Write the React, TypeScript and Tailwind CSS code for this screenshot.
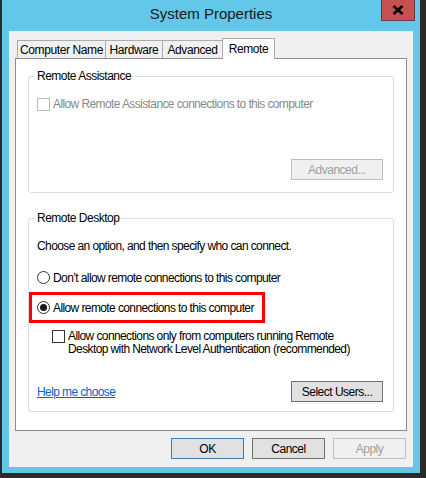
import React from "react";

const font = { fontFamily: '"Liberation Sans", Arial, sans-serif' };

function Checkbox({ disabled }: { disabled?: boolean }) {
  return (
    <span
      className={
        "block h-[13px] w-[13px] shrink-0 border bg-white " +
        (disabled ? "border-[#bcbcbc]" : "border-[#333333]")
      }
    />
  );
}

function Radio({ checked }: { checked?: boolean }) {
  return (
    <span className="flex h-[13px] w-[13px] shrink-0 items-center justify-center rounded-full border border-[#333333] bg-white">
      {checked && <span className="h-[7px] w-[7px] rounded-full bg-[#1a1a1a]" />}
    </span>
  );
}

function Button({
  label,
  variant = "normal",
  className = "",
}: {
  label: string;
  variant?: "normal" | "default" | "disabled";
  className?: string;
}) {
  const styles = {
    normal: "border-[#707070] bg-[#e1e1e1] text-black",
    default: "border-[#3c7fb1] bg-[#e1e1e1] text-black",
    disabled: "border-[#bfbfbf] bg-[#f0f0f0] text-[#a0a0a0]",
  }[variant];
  return (
    <div
      className={
        "flex h-[21px] items-center justify-center whitespace-nowrap border text-[12px] tracking-[-0.5px] " +
        styles +
        " " +
        className
      }
    >
      {label}
    </div>
  );
}

function GroupTitle({ children }: { children: React.ReactNode }) {
  return (
    <span className="-mt-[8px] ml-[6px] self-start whitespace-nowrap bg-white px-[2px] text-[12px] leading-[14px] tracking-[-0.5px] text-black">
      {children}
    </span>
  );
}

const tabs = [
  { label: "Computer Name", w: "w-[89px]" },
  { label: "Hardware", w: "w-[58px]" },
  { label: "Advanced", w: "w-[61px]" },
];

export default function App() {
  return (
    <div
      className="h-[478px] w-[426px] bg-[#2b2b2b] pb-[5px] pl-[2px] pr-[6px]"
      style={font}
    >
      <div className="flex h-full flex-col bg-[#63c7ea] px-[7px] pb-[6px]">
        {/* title bar */}
        <div className="relative -mx-[7px] flex h-[31px] shrink-0 items-center justify-center">
          <span className="pb-[2px] text-[15px] text-[#1a1a1a]">System Properties</span>
          <div className="absolute right-[5px] top-0 flex h-[21px] w-[34px] items-center justify-center border border-[#6b3a3a] border-t-0 bg-[#c75050]">
            <svg width="12" height="10" viewBox="0 0 12 10">
              <path d="M1.5 1 L10.5 9 M10.5 1 L1.5 9" stroke="#000" strokeWidth="2.6" />
            </svg>
          </div>
        </div>

        {/* client area */}
        <div className="flex flex-1 flex-col bg-[#f0f0f0] px-[6px] pt-[7px] text-[12px] tracking-[-0.6px]">
          <div className="flex h-[20px] items-end pl-[2px] tracking-[-0.4px]">
            {tabs.map((t, i) => (
              <div
                key={t.label}
                className={
                  "flex h-[18px] items-center justify-center whitespace-nowrap border border-b-0 border-[#acacac] bg-[#f0f0f0] text-black " +
                  t.w +
                  (i > 0 ? " -ml-px" : "")
                }
              >
                {t.label}
              </div>
            ))}
            <div className="relative z-10 -mb-px -ml-px flex h-[21px] w-[53px] items-center justify-center border border-b-0 border-[#acacac] bg-white pb-[1px] text-black">
              Remote
            </div>
          </div>

          {/* tab panel */}
          <div className="flex h-[373px] flex-col border border-[#898c95] bg-white px-[12px]">
            {/* Remote Assistance */}
            <div className="mt-[17px] flex h-[117px] flex-col rounded-[3px] border border-[#d5dfe5]">
              <GroupTitle>Remote Assistance</GroupTitle>
              <div className="mt-[15px] flex items-center gap-[3px] pl-[8px]">
                <Checkbox disabled />
                <span className="whitespace-nowrap leading-[13px] text-[#8a8a8a]">
                  Allow Remote Assistance connections to this computer
                </span>
              </div>
              <div className="mb-[12px] mr-[10px] mt-auto flex justify-end">
                <Button label="Advanced..." variant="disabled" className="w-[92px]" />
              </div>
            </div>

            {/* Remote Desktop */}
            <div className="mt-[25px] flex h-[194px] flex-col rounded-[3px] border border-[#d5dfe5]">
              <GroupTitle>Remote Desktop</GroupTitle>
              <p className="mt-[14px] whitespace-nowrap pl-[8px] leading-[15px] text-black">
                Choose an option, and then specify who can connect.
              </p>
              <div className="mt-[16px] flex h-[15px] items-center gap-[3px] pl-[8px]">
                <Radio />
                <span className="whitespace-nowrap text-black">
                  Don’t allow remote connections to this computer
                </span>
              </div>
              <div className="mt-[7px] flex h-[31px] w-[236px] items-center gap-[3px] border-[3px] border-[#ff0000] pl-[5px]">
                <Radio checked />
                <span className="whitespace-nowrap text-black">
                  Allow remote connections to this computer
                </span>
              </div>
              <div className="mt-[7px] flex items-start gap-[3px] pl-[23px]">
                <Checkbox />
                <span className="whitespace-nowrap leading-[13px] text-black">
                  Allow connections only from computers running Remote
                  <br />
                  Desktop with Network Level Authentication (recommended)
                </span>
              </div>
              <div className="mb-[9px] mr-[10px] mt-auto flex items-center justify-between pl-[8px]">
                <span className="whitespace-nowrap text-[#0066cc] underline">
                  Help me choose
                </span>
                <Button label="Select Users..." className="w-[92px]" />
              </div>
            </div>
          </div>

          {/* dialog buttons */}
          <div className="mt-[7px] flex justify-end gap-[8px] pr-[1px]">
            <Button label="OK" variant="default" className="w-[73px]" />
            <Button label="Cancel" className="w-[73px]" />
            <Button label="Apply" variant="disabled" className="w-[73px]" />
          </div>
        </div>
      </div>
    </div>
  );
}
